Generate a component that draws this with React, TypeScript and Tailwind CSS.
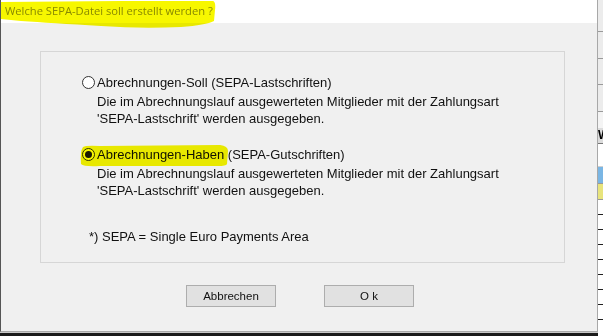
const desc = (
  <>
    Die im Abrechnungslauf ausgewerteten Mitglieder mit der Zahlungsart
    <br />
    'SEPA-Lastschrift' werden ausgegeben.
  </>
);

function Radio({ checked }: { checked?: boolean }) {
  return (
    <span className="mt-[1px] flex h-[13px] w-[13px] shrink-0 items-center justify-center rounded-full border border-[#333333] bg-white">
      {checked && <span className="h-[7px] w-[7px] rounded-full bg-[#1a1a1a]" />}
    </span>
  );
}

function Option({ checked, title }: { checked?: boolean; title: string }) {
  return (
    <div>
      <div className="relative flex items-start gap-[2px]">
        <Radio checked={checked} />
        <span>{title}</span>
        {checked && (
          <svg
            className="pointer-events-none absolute left-[-2px] top-[-2px] mix-blend-multiply"
            width="150"
            height="23"
            viewBox="0 0 150 23"
          >
            <path
              d="M3 2 Q6 0 20 1 L140 0 Q148 1 148 6 L147 19 Q146 21 138 21 L20 21 Q4 22 1 19 Q0 6 3 2 Z"
              fill="#f7f700"
            />
          </svg>
        )}
      </div>
      <p className="mt-[3px] pl-[15px] leading-[17px]">{desc}</p>
    </div>
  );
}

export default function App() {
  return (
    <div className="flex h-[336px] w-[603px] overflow-hidden bg-[#f0f0f0]">
      <div className="flex w-[598px] flex-col">
        <div className="flex h-[332px] flex-col border-b border-l border-r border-[#a8a8a8] border-l-[#555555]">
          {/* title */}
          <div className="relative h-[23px] shrink-0 bg-white pl-[4px] pt-[3px] font-['Open_Sans',sans-serif] text-[11.2px] leading-[16px] text-[#8e8e8e]">
            Welche SEPA-Datei soll erstellt werden ?
            <svg
              className="pointer-events-none absolute left-0 top-0 mix-blend-multiply"
              width="216"
              height="30"
              viewBox="0 0 216 30"
            >
              <path
                d="M0 2 L120 1 L212 1 Q215 2 214 10 L213 21 Q205 25 180 27 Q140 29 100 26 Q50 23 20 21 L0 19 Z"
                fill="#f7f700"
              />
            </svg>
          </div>

          {/* body */}
          <div className="flex-1 bg-[#f0f0f0] font-['Liberation_Sans',Arial,sans-serif] text-[13px] leading-[15px] text-[#111111]">
            <div className="ml-[39px] mt-[28px] flex h-[212px] w-[525px] flex-col border border-[#d6d6d6] pl-[41px] pt-[23px]">
              <Option title="Abrechnungen-Soll (SEPA-Lastschriften)" />
              <div className="mt-[20px]">
                <Option checked title="Abrechnungen-Haben (SEPA-Gutschriften)" />
              </div>
              <p className="ml-[7px] mt-[30px]">*) SEPA = Single Euro Payments Area</p>
            </div>

            <div className="ml-[185px] mt-[22px] flex gap-[48px] text-[11.5px]">
              <button className="h-[22px] w-[90px] border border-[#adadad] bg-[#e1e1e1] text-[#111111]">
                Abbrechen
              </button>
              <button className="h-[22px] w-[90px] border border-[#adadad] bg-[#e1e1e1] text-[#111111]">
                O k
              </button>
            </div>
          </div>
        </div>
        {/* app behind, bottom edge */}
        <div className="h-[1px] bg-[#c8c8c8]" />
        <div className="h-[3px] bg-[#1a1a1a]" />
      </div>

      {/* app behind, right edge */}
      <div className="flex w-[5px] flex-col bg-[#ececec]">
        <div className="h-[32px] border-b border-[#9a9a9a]" />
        <div className="h-[27px] border-b border-[#9a9a9a]" />
        <div className="h-[26px] border-b border-[#9a9a9a]" />
        <div className="h-[27px] border-b border-[#9a9a9a]" />
        <div className="h-[16px] bg-[#f4f4f4]" />
        <div className="h-[16px] overflow-hidden border-b border-[#777777] bg-[#dcdcdc] font-['Liberation_Sans',sans-serif] text-[12px] font-bold leading-[15px] text-black">
          W
        </div>
        <div className="h-[23px] border-b border-[#d0d0d0] bg-white" />
        <div className="h-[17px] border-b border-[#999999] bg-[#7ab6e4]" />
        <div className="h-[16px] border-b border-[#999999] bg-[#e8e47c]" />
        <div className="h-[15px] border-b border-[#222222] bg-white" />
        <div className="h-[15px] border-b border-[#222222] bg-white" />
        <div className="h-[15px] border-b border-[#222222] bg-white" />
        <div className="h-[15px] border-b border-[#222222] bg-white" />
        <div className="h-[15px] border-b border-[#222222] bg-white" />
        <div className="h-[15px] border-b border-[#222222] bg-white" />
        <div className="h-[15px] border-b border-[#222222] bg-white" />
        <div className="h-[15px] border-b border-[#222222] bg-white" />
        <div className="flex-1 bg-white" />
      </div>
    </div>
  );
}
